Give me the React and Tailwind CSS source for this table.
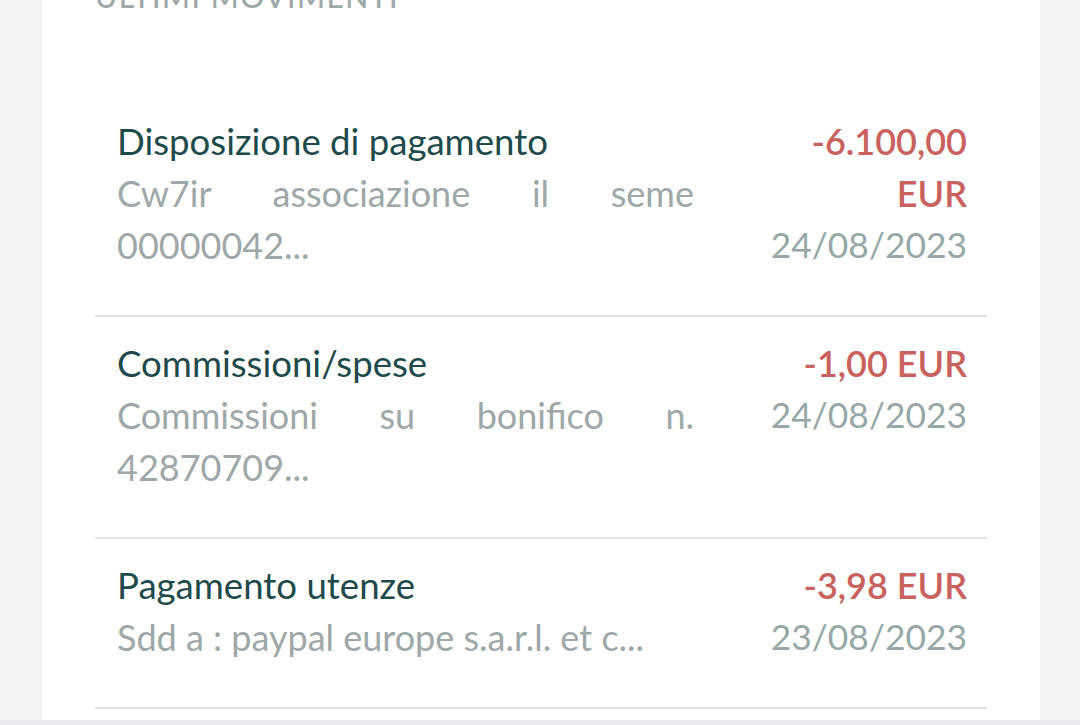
const rows = [
  {
    title: "Disposizione di pagamento",
    desc: "Cw7ir associazione il seme 00000042...",
    amount: "-6.100,00 EUR",
    date: "24/08/2023",
  },
  {
    title: "Commissioni/spese",
    desc: "Commissioni su bonifico n. 42870709...",
    amount: "-1,00 EUR",
    date: "24/08/2023",
  },
  {
    title: "Pagamento utenze",
    desc: "Sdd a : paypal europe s.a.r.l. et c...",
    amount: "-3,98 EUR",
    date: "23/08/2023",
  },
];

const MovementRow = ({ row }) => (
  <div className="flex gap-[61px] pl-[22px] pr-[20px] pt-[20px] pb-[44px] border-b-2 border-[#e2e2e2]">
    <div className="flex-1 min-w-0 leading-[52px]">
      <div className="text-[36.6px] text-[#1f4a4c]">{row.title}</div>
      <div className="text-[36px] text-[#9ea8a8] text-justify">{row.desc}</div>
    </div>
    <div className="w-[212px] shrink-0 text-right leading-[52px]">
      <div className="text-[36px] font-semibold text-[#c9625f]">{row.amount}</div>
      <div className="text-[35.4px] text-[#97a7a7]">{row.date}</div>
    </div>
  </div>
);

export default function App() {
  return (
    <div className="h-[725px] overflow-hidden bg-[#f3f3f3] font-['Lato',sans-serif]">
      <div className="ml-[42px] w-[998px] h-[720px] bg-white overflow-hidden">
        <div className="px-[53px]">
          <h2 className="-mt-[22px] h-[117px] text-[30px] leading-[36px] tracking-[0.05em] text-[#9ea8a8] font-medium">
            ULTIMI MOVIMENTI
          </h2>
          {rows.map((row) => (
            <MovementRow key={row.title} row={row} />
          ))}
        </div>
      </div>
      <div className="h-[5px] bg-[#e6eaed]" />
    </div>
  );
}
